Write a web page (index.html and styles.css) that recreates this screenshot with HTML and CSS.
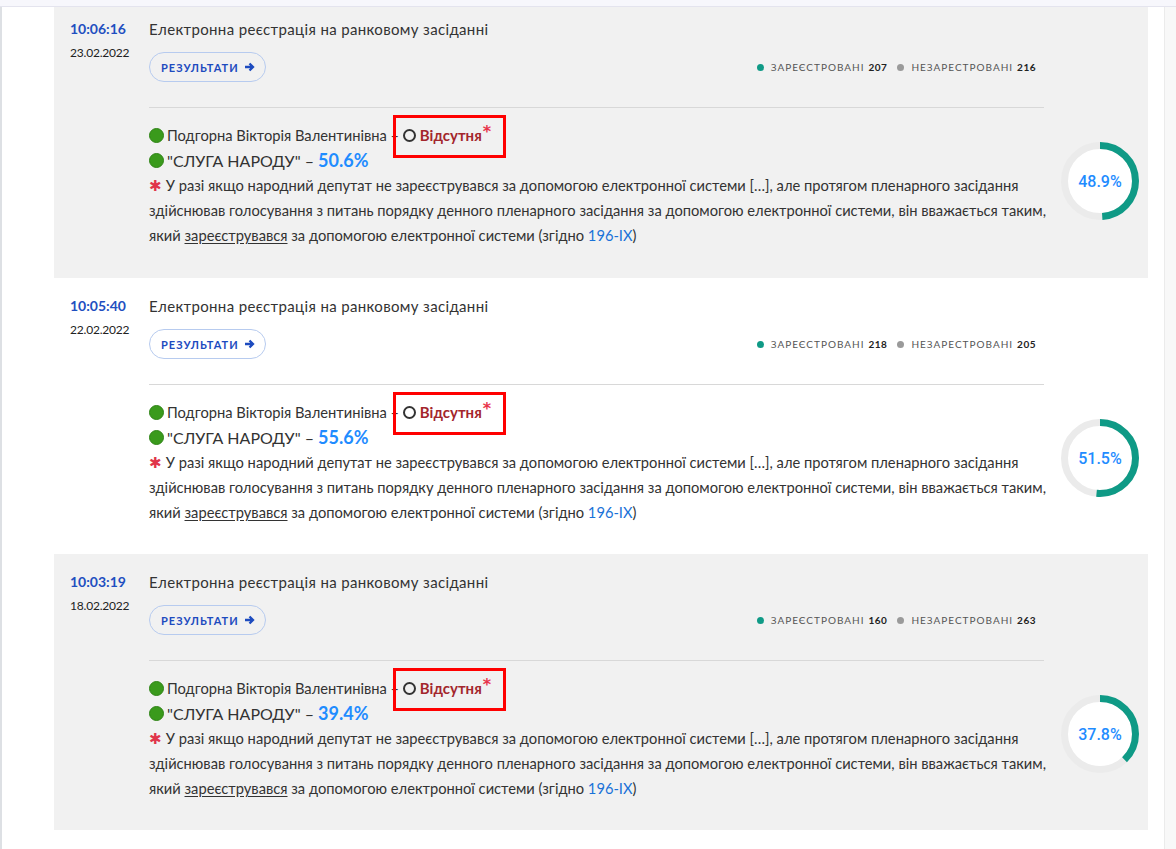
FILE: index.html
```html
<!DOCTYPE html>
<html lang="uk">
<head>
    <meta charset="UTF-8">
    <meta name="viewport" content="width=device-width, initial-scale=1.0">
    <title>Реєстрація</title>
    <link rel="stylesheet" href="styles.css">
</head>
<body>
    <div class="topbar"></div>
    <div class="layout">
        <div class="strip"></div>
        <div class="content">

            <div class="row gray first">
                <div class="time-col">
                    <div class="time">10:06:16</div>
                    <div class="date">23.02.2022</div>
                </div>
                <div class="main">
                    <div class="head">
                        <div class="title">Електронна реєстрація на ранковому засіданні</div>
                        <div class="actions">
                            <a class="btn" href="#">РЕЗУЛЬТАТИ
                                <svg width="11" height="10" viewBox="0 0 11 10"><path d="M1 5h7.5M5.5 1.5L9 5L5.5 8.5" fill="none" stroke="currentColor" stroke-width="2.3"/></svg>
                            </a>
                            <div class="legend">
                                <span class="dot teal"></span>ЗАРЕЄСТРОВАНІ <b>207</b>
                                <span class="dot grey"></span>НЕЗАРЕСТРОВАНІ <b>216</b>
                            </div>
                        </div>
                    </div>
                    <div class="body">
                        <div class="info">
                            <div class="line"><span class="green"></span>Подгорна Вікторія Валентинівна – <span class="status"><span class="ring"></span>Відсутня<span class="ast">*</span></span></div>
                            <div class="line party"><span class="green"></span>"СЛУГА НАРОДУ" – <span class="pct">50.6%</span></div>
                            <p class="note"><span class="star">✱</span> У разі якщо народний депутат не зареєструвався за допомогою електронної системи […], але протягом пленарного засідання здійснював голосування з питань порядку денного пленарного засідання за допомогою електронної системи, він вважається таким, який <u>зареєструвався</u> за допомогою електронної системи (згідно <a href="#">196-ІХ</a>)</p>
                        </div>
                        <div class="donut">
                            <svg width="78" height="78" viewBox="0 0 78 78">
                                <circle cx="39" cy="39" r="35.5" fill="#fff" stroke="#ebebeb" stroke-width="7"/>
                                <circle cx="39" cy="39" r="35.5" fill="none" stroke="#0f9a86" stroke-width="7" stroke-dasharray="109.07 223.05" transform="rotate(-90 39 39)"/>
                            </svg>
                            <span class="donut-val">48.9%</span>
                        </div>
                    </div>
                </div>
            </div>

            <div class="row">
                <div class="time-col">
                    <div class="time">10:05:40</div>
                    <div class="date">22.02.2022</div>
                </div>
                <div class="main">
                    <div class="head">
                        <div class="title">Електронна реєстрація на ранковому засіданні</div>
                        <div class="actions">
                            <a class="btn" href="#">РЕЗУЛЬТАТИ
                                <svg width="11" height="10" viewBox="0 0 11 10"><path d="M1 5h7.5M5.5 1.5L9 5L5.5 8.5" fill="none" stroke="currentColor" stroke-width="2.3"/></svg>
                            </a>
                            <div class="legend">
                                <span class="dot teal"></span>ЗАРЕЄСТРОВАНІ <b>218</b>
                                <span class="dot grey"></span>НЕЗАРЕСТРОВАНІ <b>205</b>
                            </div>
                        </div>
                    </div>
                    <div class="body">
                        <div class="info">
                            <div class="line"><span class="green"></span>Подгорна Вікторія Валентинівна – <span class="status"><span class="ring"></span>Відсутня<span class="ast">*</span></span></div>
                            <div class="line party"><span class="green"></span>"СЛУГА НАРОДУ" – <span class="pct">55.6%</span></div>
                            <p class="note"><span class="star">✱</span> У разі якщо народний депутат не зареєструвався за допомогою електронної системи […], але протягом пленарного засідання здійснював голосування з питань порядку денного пленарного засідання за допомогою електронної системи, він вважається таким, який <u>зареєструвався</u> за допомогою електронної системи (згідно <a href="#">196-ІХ</a>)</p>
                        </div>
                        <div class="donut">
                            <svg width="78" height="78" viewBox="0 0 78 78">
                                <circle cx="39" cy="39" r="35.5" fill="#fff" stroke="#ebebeb" stroke-width="7"/>
                                <circle cx="39" cy="39" r="35.5" fill="none" stroke="#0f9a86" stroke-width="7" stroke-dasharray="114.87 223.05" transform="rotate(-90 39 39)"/>
                            </svg>
                            <span class="donut-val">51.5%</span>
                        </div>
                    </div>
                </div>
            </div>

            <div class="row gray">
                <div class="time-col">
                    <div class="time">10:03:19</div>
                    <div class="date">18.02.2022</div>
                </div>
                <div class="main">
                    <div class="head">
                        <div class="title">Електронна реєстрація на ранковому засіданні</div>
                        <div class="actions">
                            <a class="btn" href="#">РЕЗУЛЬТАТИ
                                <svg width="11" height="10" viewBox="0 0 11 10"><path d="M1 5h7.5M5.5 1.5L9 5L5.5 8.5" fill="none" stroke="currentColor" stroke-width="2.3"/></svg>
                            </a>
                            <div class="legend">
                                <span class="dot teal"></span>ЗАРЕЄСТРОВАНІ <b>160</b>
                                <span class="dot grey"></span>НЕЗАРЕСТРОВАНІ <b>263</b>
                            </div>
                        </div>
                    </div>
                    <div class="body">
                        <div class="info">
                            <div class="line"><span class="green"></span>Подгорна Вікторія Валентинівна – <span class="status"><span class="ring"></span>Відсутня<span class="ast">*</span></span></div>
                            <div class="line party"><span class="green"></span>"СЛУГА НАРОДУ" – <span class="pct">39.4%</span></div>
                            <p class="note"><span class="star">✱</span> У разі якщо народний депутат не зареєструвався за допомогою електронної системи […], але протягом пленарного засідання здійснював голосування з питань порядку денного пленарного засідання за допомогою електронної системи, він вважається таким, який <u>зареєструвався</u> за допомогою електронної системи (згідно <a href="#">196-ІХ</a>)</p>
                        </div>
                        <div class="donut">
                            <svg width="78" height="78" viewBox="0 0 78 78">
                                <circle cx="39" cy="39" r="35.5" fill="#fff" stroke="#ebebeb" stroke-width="7"/>
                                <circle cx="39" cy="39" r="35.5" fill="none" stroke="#0f9a86" stroke-width="7" stroke-dasharray="84.31 223.05" transform="rotate(-90 39 39)"/>
                            </svg>
                            <span class="donut-val">37.8%</span>
                        </div>
                    </div>
                </div>
            </div>

            <div class="row"></div>

        </div>
    </div>
</body>
</html>
```

FILE: styles.css
```css
body {
    margin: 0;
    font-family: Lato, "Noto Sans", sans-serif;
    background-color: #f8f8f8;
    color: #333;
}
.topbar {
    position: fixed;
    top: 0;
    left: 0;
    right: 0;
    height: 6px;
    background: #f7f7fc;
    border-bottom: 1px solid #e4e4ee;
    z-index: 5;
}
.layout {
    display: flex;
    min-height: 100vh;
}
.strip {
    width: 2px;
    background: #dde0e4;
}
.content {
    width: 1163px;
    background: white;
    padding: 1px 16px 0 52px;
    box-sizing: border-box;
    border-right: 1px solid #ebebeb;
}
.row {
    display: flex;
    height: 276px;
    padding: 13px 9px 0 16px;
    box-sizing: border-box;
}
.row.first {
    height: 277px;
}
.row.gray {
    background: #f1f1f1;
}
.time-col {
    width: 80px;
}
.time {
    font-weight: bold;
    font-size: 14px;
    line-height: 30px;
    color: #1f4fc0;
}
.date {
    font-size: 12px;
    line-height: 18px;
    color: #222;
    letter-spacing: -0.2px;
}
.main {
    flex: 1;
}
.head {
    width: 895px;
    border-bottom: 1px solid #d8d8d8;
    padding-bottom: 25px;
}
.title {
    font-size: 15px;
    line-height: 30px;
    letter-spacing: 0.35px;
    color: #333;
}
.actions {
    display: flex;
    justify-content: space-between;
    align-items: center;
    margin-top: 8px;
}
.btn {
    display: flex;
    align-items: center;
    gap: 5px;
    height: 30px;
    box-sizing: border-box;
    padding: 0 10px 0 11px;
    border: 1px solid #b7cbef;
    border-radius: 15px;
    color: #1d4bbf;
    font-size: 11px;
    font-weight: bold;
    letter-spacing: 1px;
    text-decoration: none;
}
.legend {
    display: flex;
    align-items: center;
    padding-right: 8px;
    font-size: 10px;
    letter-spacing: 1px;
    color: #555;
}
.legend b {
    color: #222;
    margin-left: 4px;
    margin-right: 10px;
    letter-spacing: 0.5px;
}
.legend b:last-child {
    margin-right: 0;
}
.dot {
    display: inline-block;
    width: 7px;
    height: 7px;
    border-radius: 50%;
    margin-right: 7px;
}
.dot.teal {
    background: #0f9a86;
}
.dot.grey {
    background: #9a9a9a;
}
.body {
    display: flex;
    align-items: flex-start;
}
.info {
    width: 900px;
    padding-top: 15px;
    font-size: 14.7px;
    line-height: 25px;
}
.line {
    display: flex;
    align-items: center;
    white-space: pre;
}
.party {
    font-size: 16px;
}
.green {
    display: inline-block;
    width: 13px;
    height: 13px;
    border-radius: 50%;
    background: #3a9a1c;
    border: 1px solid #2f8416;
    margin-right: 3px;
}
.status {
    position: relative;
    display: inline-flex;
    align-items: center;
    color: #a3262c;
    font-weight: bold;
    font-size: 15px;
}
.status::after {
    content: "";
    position: absolute;
    left: -10px;
    top: -8px;
    width: 107px;
    height: 37px;
    border: 3px solid #ff0000;
}
.ring {
    display: inline-block;
    width: 9px;
    height: 9px;
    border: 2px solid #333;
    border-radius: 50%;
    margin-right: 4px;
}
.ast {
    font-family: "DejaVu Sans", sans-serif;
    color: #e8334a;
    font-size: 16px;
    line-height: 16px;
    position: relative;
    top: -4px;
    margin-left: 1px;
}
.pct {
    color: #1f8cff;
    font-weight: bold;
    font-size: 18px;
}
.note {
    margin: 0;
}
.star {
    color: #e0354a;
    line-height: 20px;
}
.note u {
    text-underline-offset: 2px;
}
.note a {
    color: #1a72d8;
    text-decoration: none;
}
.donut {
    position: relative;
    width: 78px;
    height: 78px;
    margin: 34px 0 0 12px;
}
.donut svg {
    display: block;
}
.donut-val {
    position: absolute;
    inset: 0;
    display: flex;
    align-items: center;
    justify-content: center;
    font-family: Roboto, sans-serif;
    font-size: 16px;
    font-weight: 500;
    color: #1f8cff;
}
```
